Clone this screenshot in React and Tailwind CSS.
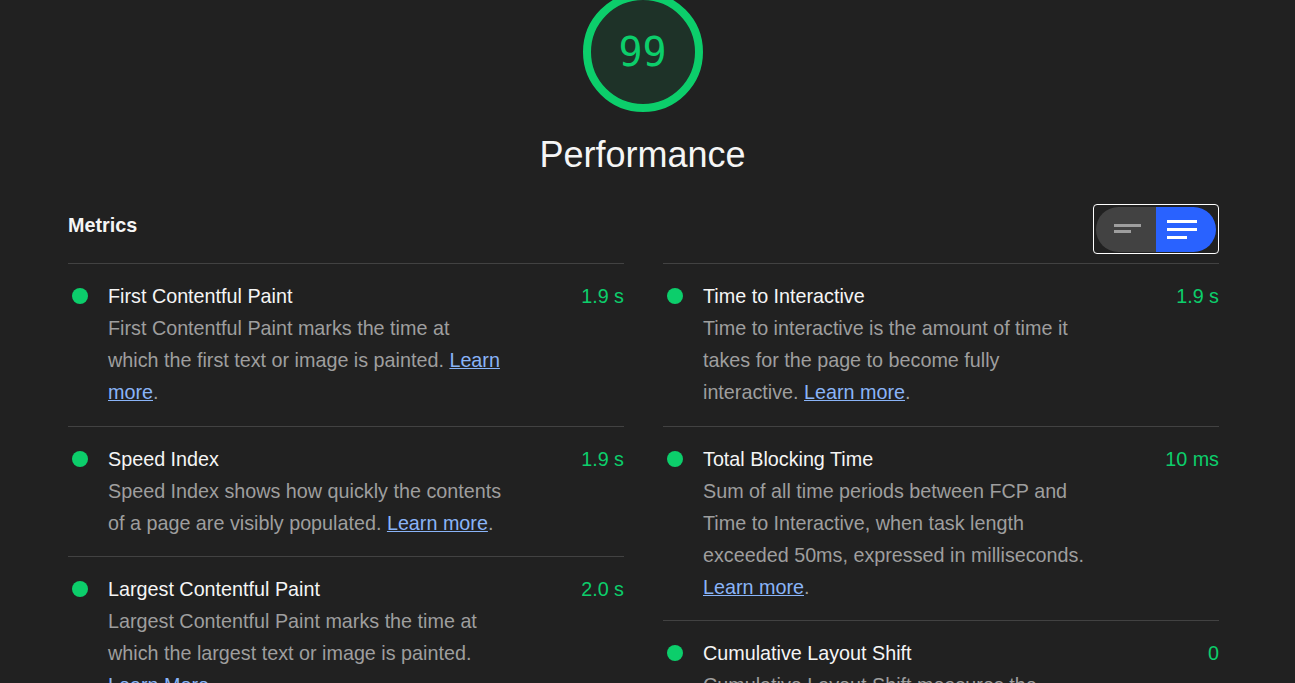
import React from 'react';

// ════════════════════════════════════════════════════════════
// DATA
// ════════════════════════════════════════════════════════════
const LEFT = [
  {
    title: 'First Contentful Paint',
    value: '1.9 s',
    desc: 'First Contentful Paint marks the time at which the first text or image is painted.',
    link: 'Learn more',
  },
  {
    title: 'Speed Index',
    value: '1.9 s',
    desc: 'Speed Index shows how quickly the contents of a page are visibly populated.',
    link: 'Learn more',
  },
  {
    title: 'Largest Contentful Paint',
    value: '2.0 s',
    desc: 'Largest Contentful Paint marks the time at which the largest text or image is painted.',
    link: 'Learn More',
  },
];

const RIGHT = [
  {
    title: 'Time to Interactive',
    value: '1.9 s',
    desc: 'Time to interactive is the amount of time it takes for the page to become fully interactive.',
    link: 'Learn more',
  },
  {
    title: 'Total Blocking Time',
    value: '10 ms',
    desc: 'Sum of all time periods between FCP and Time to Interactive, when task length exceeded 50ms, expressed in milliseconds.',
    link: 'Learn more',
  },
  {
    title: 'Cumulative Layout Shift',
    value: '0',
    desc: 'Cumulative Layout Shift measures the movement of visible elements within the viewport.',
    link: 'Learn more',
  },
];

// ════════════════════════════════════════════════════════════
// GAUGE
// ════════════════════════════════════════════════════════════
const Gauge = ({ score }) => (
  <div className="relative -mt-[8px] h-[120px] w-[120px]">
    <svg width="120" height="120" viewBox="0 0 120 120" className="absolute inset-0">
      <circle cx="60" cy="60" r="56" fill="rgba(12,206,107,0.1)" stroke="#0cce6b" strokeWidth="8" />
    </svg>
    <div className="absolute inset-0 flex items-center justify-center text-[40px] leading-none text-[#0cce6b] [font-family:'DejaVu_Sans_Mono',monospace]">
      {score}
    </div>
  </div>
);

// ════════════════════════════════════════════════════════════
// TOGGLE
// ════════════════════════════════════════════════════════════
const ViewToggle = () => (
  <div className="flex h-[50px] w-[126px] items-center justify-center rounded-[4px] border border-white">
    <div className="flex h-[45px] w-[120px] overflow-hidden rounded-full">
      <div className="flex flex-1 items-center justify-center bg-[#424242]">
        <svg width="28" height="12" viewBox="0 0 28 12" className="-mr-1">
          <rect x="0" y="1" width="27" height="3" fill="#9e9e9e" />
          <rect x="0" y="7" width="17" height="3" fill="#9e9e9e" />
        </svg>
      </div>
      <div className="flex flex-1 items-center justify-center bg-[#2962ff]">
        <svg width="30" height="20" viewBox="0 0 30 20" className="-ml-2">
          <rect x="0" y="1" width="30" height="3" fill="#fff" />
          <rect x="0" y="9" width="30" height="3" fill="#fff" />
          <rect x="0" y="17" width="20" height="3" fill="#fff" />
        </svg>
      </div>
    </div>
  </div>
);

// ════════════════════════════════════════════════════════════
// METRIC ROW
// ════════════════════════════════════════════════════════════
const Metric = ({ m }) => (
  <div className="flex border-t border-[#424242] pb-[17.5px] pt-4">
    <div className="flex h-8 w-10 shrink-0 items-center pl-1">
      <span className="h-4 w-4 rounded-full bg-[#0cce6b]" />
    </div>
    <div className="min-w-0 flex-1">
      <div className="flex justify-between leading-8">
        <span className="text-[#f5f5f5]">{m.title}</span>
        <span className="text-[#0cce6b]">{m.value}</span>
      </div>
      <p className="max-w-[395px] leading-8 text-[#9e9e9e]">
        {m.desc}{' '}
        <a href="#" className="text-[#8ab4f8] underline">{m.link}</a>.
      </p>
    </div>
  </div>
);

// ════════════════════════════════════════════════════════════
// APP
// ════════════════════════════════════════════════════════════
export default function App() {
  return (
    <div className="h-[683px] w-[1295px] overflow-hidden bg-[#212121] text-[19.75px] [font-family:'Liberation_Sans',Arial,sans-serif]">
      <div className="flex w-[1285px] flex-col items-center">
        <Gauge score="99" />
        <h1 className="mt-[23px] text-[36px] leading-[40px] text-[#f5f5f5]">Performance</h1>
      </div>

      <div className="ml-[68px] mt-[29px] w-[1151px]">
        <div className="flex items-center justify-between">
          <span className="pb-[6px] font-bold text-[#f5f5f5]">Metrics</span>
          <ViewToggle />
        </div>

        <div className="mt-[9px] grid grid-cols-2 gap-x-[39px]">
          <div>
            {LEFT.map((m) => <Metric key={m.title} m={m} />)}
          </div>
          <div>
            {RIGHT.map((m) => <Metric key={m.title} m={m} />)}
          </div>
        </div>
      </div>
    </div>
  );
}
